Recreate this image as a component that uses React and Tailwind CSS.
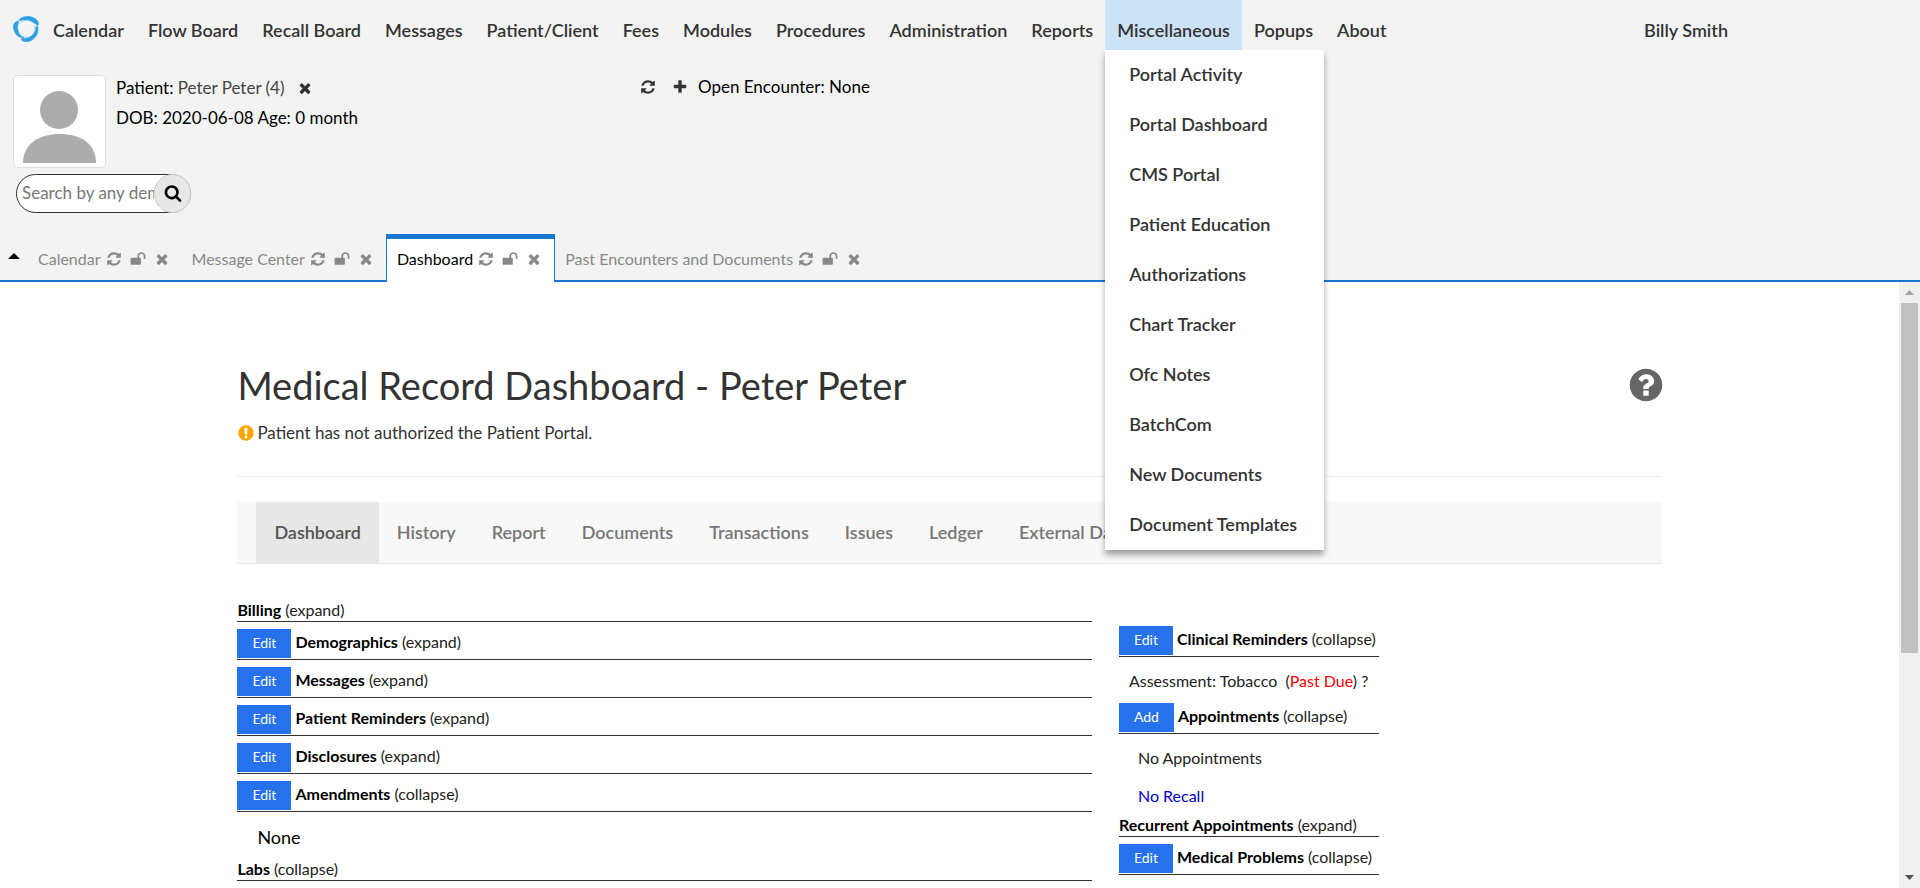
const ICONS = {
  times:
    "M1490 1322q0 40-28 68l-136 136q-28 28-68 28t-68-28l-294-294-294 294q-28 28-68 28t-68-28l-136-136q-28-28-28-68t28-68l294-294-294-294q-28-28-28-68t28-68l136-136q28-28 68-28t68 28l294 294 294-294q28-28 68-28t68 28l136 136q28 28 28 68t-28 68l-294 294 294 294q28 28 28 68z",
  plus:
    "M1600 736v192q0 40-28 68t-68 28h-416v416q0 40-28 68t-68 28h-192q-40 0-68-28t-28-68v-416h-416q-40 0-68-28t-28-68v-192q0-40 28-68t68-28h416v-416q0-40 28-68t68-28h192q40 0 68 28t28 68v416h416q40 0 68 28t28 68z",
  refresh:
    "M1639 1056q0 5-1 7-64 268-268 434.5t-478 166.5q-146 0-282.5-55t-243.5-157l-129 129q-19 19-45 19t-45-19-19-45v-448q0-26 19-45t45-19h448q26 0 45 19t19 45-19 45l-137 137q71 66 161 102t187 36q134 0 250-65t186-179q11-17 53-117 8-23 30-23h192q13 0 22.5 9.5t9.5 22.5zm25-800v448q0 26-19 45t-45 19h-448q-26 0-45-19t-19-45 19-45l138-138q-148-137-349-137-134 0-250 65t-186 179q-11 17-53 117-8 23-30 23h-199q-13 0-22.5-9.5t-9.5-22.5v-7q65-268 270-434.5t480-166.5q146 0 284 55.5t245 156.5l130-129q19-19 45-19t45 19 19 45z",
  search:
    "M1216 832q0-185-131.5-316.5t-316.5-131.5-316.5 131.5-131.5 316.5 131.5 316.5 316.5 131.5 316.5-131.5 131.5-316.5zm512 832q0 52-38 90t-90 38q-54 0-90-38l-343-342q-179 124-399 124-143 0-273.5-55.5t-225-150-150-225-55.5-273.5 55.5-273.5 150-225 225-150 273.5-55.5 273.5 55.5 225 150 150 225 55.5 273.5q0 220-124 399l343 343q37 37 37 90z",
  unlock:
    "M1728 576v256q0 26-19 45t-45 19h-64q-26 0-45-19t-19-45v-256q0-106-75-181t-181-75-181 75-75 181v192h96q40 0 68 28t28 68v576q0 40-28 68t-68 28h-960q-40 0-68-28t-28-68v-576q0-40 28-68t68-28h672v-192q0-185 131.5-316.5t316.5-131.5 316.5 131.5 131.5 316.5z",
  question:
    "M1024 1376v-192q0-14-9-23t-23-9h-192q-14 0-23 9t-9 23v192q0 14 9 23t23 9h192q14 0 23-9t9-23zm256-672q0-88-55.5-163t-138.5-116-170-41q-243 0-371 213-15 24 8 42l132 100q7 6 19 6 16 0 25-12 53-68 86-92 34-24 86-24 48 0 85.5 26t37.5 59q0 38-20 61t-68 45q-63 28-115.5 86.5t-52.5 125.5v36q0 14 9 23t23 9h192q14 0 23-9t9-23q0-19 21.5-49.5t54.5-49.5q32-18 49-28.5t46-35 44.5-48 28-60.5 12.5-81zm384 192q0 209-103 385.5t-279.5 279.5-385.5 103-385.5-103-279.5-279.5-103-385.5 103-385.5 279.5-279.5 385.5-103 385.5 103 279.5 279.5 103 385.5z",
  warning:
    "M896 128q209 0 385.5 103t279.5 279.5 103 385.5-103 385.5-279.5 279.5-385.5 103-385.5-103-279.5-279.5-103-385.5 103-385.5 279.5-279.5 385.5-103zm128 1247v-190q0-14-9-23.5t-22-9.5h-192q-13 0-23 10t-10 23v190q0 13 10 23t23 10h192q13 0 22-9.5t9-23.5zm-2-344l18-621q0-12-10-18-10-8-24-8h-220q-14 0-24 8-10 6-10 18l17 621q0 10 10 17.5t24 7.5h185q14 0 23.5-7.5t10.5-17.5z",
};

function Icon({ name, className }) {
  return (
    <svg viewBox="0 0 1792 1792" fill="currentColor" aria-hidden="true" className={className}>
      <path d={ICONS[name]} />
    </svg>
  );
}

function Logo() {
  return (
    <svg viewBox="0 0 26 26" className="size-[26px]" aria-hidden="true">
      <g fill="#2d9fe0" stroke="#2d9fe0" strokeWidth="0.7" strokeLinejoin="round">
        <path d="M5.500 4.500C9-1 21-1 24.800 5.500C25.600 7.200 25.400 8.600 24.400 9.600C20.500 4.500 12 3 5.500 4.500Z" />
        <path d="M4 5.500C5.500 5 6 6 5.200 7.200C3.500 12 5 19 11 21.800C5 22.300 .2 17 .5 9.800C.7 7.700 2 5.800 4 5.500Z" />
        <path d="M24.500 10.300C26 15.500 23.800 22 17 25C13 26 8.700 25.500 8.300 23.600C8.300 22.600 9 22.200 10 22.400C16.500 23 22 18.500 22.500 12C22.800 10.600 23.800 10 24.500 10.300Z" />
      </g>
      <path
        d="M6.500 7C10 3.500 16 3.500 20.500 7M5.500 16C7.500 20.500 12 22 16 21M21.500 9C23 13 21.500 17.500 18 20"
        fill="none"
        stroke="#9fd0f0"
        strokeWidth="1"
      />
    </svg>
  );
}

const NAV = [
  "Calendar", "Flow Board", "Recall Board", "Messages", "Patient/Client", "Fees", "Modules",
  "Procedures", "Administration", "Reports", "Miscellaneous", "Popups", "About",
];

const MENU = [
  "Portal Activity", "Portal Dashboard", "CMS Portal", "Patient Education", "Authorizations",
  "Chart Tracker", "Ofc Notes", "BatchCom", "New Documents", "Document Templates",
];

const TABS = ["Calendar", "Message Center", "Dashboard", "Past Encounters and Documents"];

const SECTIONS = [
  "Dashboard", "History", "Report", "Documents", "Transactions", "Issues", "Ledger", "External Data",
];

function NavBar() {
  return (
    <nav className="flex h-[50px] items-stretch pl-[13px] text-[18px] font-semibold text-[#333]">
      <a href="#home" aria-label="Home" className="mt-4 mr-[2px]">
        <Logo />
      </a>
      {NAV.map((label) => (
        <div
          key={label}
          className={label === "Miscellaneous" ? "relative bg-[#cce2f7]" : "relative"}
        >
          <button type="button" className="flex h-full items-center px-3 pt-[11px] whitespace-nowrap">
            {label}
          </button>
          {label === "Miscellaneous" && (
            <ul className="absolute top-full left-0 z-10 w-[219px] bg-white shadow-[0_5px_6px_rgba(0,0,0,0.35)]">
              {MENU.map((item) => (
                <li key={item}>
                  <a href="#menu" className="flex h-[50px] items-center px-6 pb-[2px] whitespace-nowrap">
                    {item}
                  </a>
                </li>
              ))}
            </ul>
          )}
        </div>
      ))}
      <button type="button" className="mr-[192px] ml-auto flex items-center pt-[11px]">
        Billy Smith
      </button>
    </nav>
  );
}

function PatientBar() {
  return (
    <section className="flex h-[184px] pt-[23px] text-[17px] leading-[30px] text-black">
      <div className="w-1/3 pl-[13px]">
        <div className="flex gap-[10px]">
          <div className="mt-[2px] size-[93px] shrink-0 rounded-[5px] border border-[#ddd] bg-white">
            <svg viewBox="0 0 91 91" fill="#acacac" role="img" aria-label="Patient photo">
              <ellipse cx="45" cy="34" rx="19" ry="19" />
              <path d="M9 87C9 67 26 58 46 58S82 67 82 87Z" />
            </svg>
          </div>
          <div>
            <div className="flex items-center">
              Patient:&nbsp;
              <a href="#patient" className="text-[#444]">Peter Peter (4)</a>
              <button type="button" aria-label="Clear patient" className="ml-3 text-[#333]">
                <Icon name="times" className="size-4" />
              </button>
            </div>
            <div>DOB: 2020-06-08 Age: 0 month</div>
          </div>
        </div>
        <form className="mt-[6px] ml-[3px] flex h-[39px] w-[175px] rounded-full border border-[#333] bg-white">
          <input
            type="text"
            aria-label="Search patients"
            placeholder="Search by any demographics"
            className="min-w-0 flex-1 rounded-l-full pb-[2px] pl-[5px] outline-none placeholder:text-[#777]"
          />
          <button
            type="button"
            aria-label="Search"
            className="-my-px -mr-px flex w-[37px] items-center justify-center rounded-full border border-[#ccc] bg-[#e7e7e7] pb-[2px]"
          >
            <Icon name="search" className="size-[18px]" />
          </button>
        </form>
      </div>
      <div className="flex h-7 items-center">
        <button type="button" aria-label="Refresh encounter" className="text-[#333]">
          <Icon name="refresh" className="size-4" />
        </button>
        <button type="button" aria-label="New encounter" className="mr-[10px] ml-4 text-[#333]">
          <Icon name="plus" className="size-4" />
        </button>
        Open Encounter: None
      </div>
    </section>
  );
}

function TabStrip() {
  return (
    <div className="flex h-12 items-end border-b-2 border-[#1976d2] pl-2 text-[16px] text-[#888]">
      <button type="button" aria-label="Collapse header" className="mr-2 mb-[21px]">
        <svg viewBox="0 0 12 6" className="h-[6px] w-3" aria-hidden="true">
          <path d="M6 0L12 6H0Z" fill="#000" />
        </svg>
      </button>
      {TABS.map((label) => {
        const active = label === "Dashboard";
        return (
          <div
            key={label}
            className={
              active
                ? "-mb-[2px] flex h-12 items-center border-x border-t-[5px] border-[#1976d2] bg-white px-[10px] pb-[3px]"
                : "flex h-[46px] items-center px-[10px] pt-[4px]"
            }
          >
            <button type="button" className={active ? "text-black" : ""}>{label}</button>
            <button type="button" aria-label={"Refresh " + label} className="ml-[5px]">
              <Icon name="refresh" className="size-4" />
            </button>
            <button type="button" aria-label={"Unlock " + label} className="ml-2">
              <Icon name="unlock" className="size-4" />
            </button>
            <button type="button" aria-label={"Close " + label} className="mr-[2px] ml-2">
              <Icon name="times" className="size-4" />
            </button>
          </div>
        );
      })}
    </div>
  );
}

function SectionRow({ title, state, action }) {
  return (
    <div
      className={
        action
          ? "flex h-[38px] items-center border-b border-[#333] pt-[6px] text-[16px]"
          : "flex h-[25px] items-center border-b border-[#333] pt-[2px] text-[16px]"
      }
    >
      {action && (
        <button type="button" className="mr-1 h-[29px] bg-[#2672ec] px-[15px] pb-[3px] text-[14px] text-white">
          {action}
        </button>
      )}
      <div className={action ? "flex pb-[3px]" : "flex"}>
        <span className="font-bold text-black">{title}</span>
        <a href="#toggle" className="ml-1 text-[#222]">({state})</a>
      </div>
    </div>
  );
}

function ScrollBar() {
  return (
    <div className="flex w-[21px] shrink-0 flex-col bg-[#f0f0f0] px-[2px]" aria-hidden="true">
      <div className="flex h-[21px] shrink-0 items-center justify-center">
        <svg viewBox="0 0 9 5" className="h-[5px] w-[9px]"><path d="M4.500 0L9 5H0Z" fill="#a3a3a3" /></svg>
      </div>
      <div className="min-h-0 flex-1">
        <div className="h-[62%] bg-[#c1c1c1]" />
      </div>
      <div className="flex h-[21px] shrink-0 items-center justify-center">
        <svg viewBox="0 0 9 5" className="h-[5px] w-[9px]"><path d="M0 0H9L4.500 5Z" fill="#505050" /></svg>
      </div>
    </div>
  );
}

export default function App() {
  return (
    <div className="flex h-screen flex-col overflow-hidden bg-white font-['Lato',sans-serif]">
      <header className="bg-[#f3f3f3]">
        <NavBar />
        <PatientBar />
        <TabStrip />
      </header>
      <div className="flex min-h-0 flex-1">
        <main className="min-w-0 flex-1 overflow-hidden">
          <div className="mx-auto w-3/4 pt-[80px] text-[#333]">
            <div className="flex items-center justify-between">
              <h1 className="text-[38px] leading-[46px]">Medical Record Dashboard - Peter Peter</h1>
              <button type="button" aria-label="Help" className="-mr-[3px] text-[#666]">
                <Icon name="question" className="size-[38px]" />
              </button>
            </div>
            <p className="mt-3 flex items-center gap-[2px] text-[17px] leading-[26px]">
              <Icon name="warning" className="size-[18px] text-[#ffa500]" />
              Patient has not authorized the Patient Portal.
            </p>
            <hr className="mt-[30px] border-[#eee]" />
            <nav className="mt-[25px] flex h-[62px] border-b border-[#e7e7e7] bg-[#f8f8f8] pl-[19px] text-[18px] font-semibold text-[#777]">
              {SECTIONS.map((label) => (
                <a
                  key={label}
                  href="#section"
                  className={
                    label === "Dashboard"
                      ? "flex items-center bg-[#e7e7e7] px-[18px] text-[#555]"
                      : "flex items-center px-[18px]"
                  }
                >
                  {label}
                </a>
              ))}
            </nav>
            <div className="flex gap-[27px] pt-[33px]">
              <div className="w-3/5">
                <SectionRow title="Billing" state="expand" />
                <SectionRow title="Demographics" state="expand" action="Edit" />
                <SectionRow title="Messages" state="expand" action="Edit" />
                <SectionRow title="Patient Reminders" state="expand" action="Edit" />
                <SectionRow title="Disclosures" state="expand" action="Edit" />
                <SectionRow title="Amendments" state="collapse" action="Edit" />
                <p className="pt-[14px] pb-[8px] pl-5 text-[18px] leading-[22px] text-black">None</p>
                <SectionRow title="Labs" state="collapse" />
              </div>
              <div className="w-[260px] pt-[22px]">
                <SectionRow title="Clinical Reminders" state="collapse" action="Edit" />
                <p className="pt-[13px] pb-[5px] pl-[10px] text-[16px] leading-[21px] text-[#222]">
                  Assessment: Tobacco &nbsp;(<span className="text-[#f00]">Past Due</span>) ?
                </p>
                <SectionRow title="Appointments" state="collapse" action="Add" />
                <div className="flex flex-col pt-[5px] pb-px pl-[19px] text-[16px] leading-[38px] text-[#222]">
                  <span>No Appointments</span>
                  <a href="#recall" className="h-[34px] text-[#00c]">No Recall</a>
                </div>
                <SectionRow title="Recurrent Appointments" state="expand" />
                <SectionRow title="Medical Problems" state="collapse" action="Edit" />
              </div>
            </div>
          </div>
        </main>
        <ScrollBar />
      </div>
    </div>
  );
}
